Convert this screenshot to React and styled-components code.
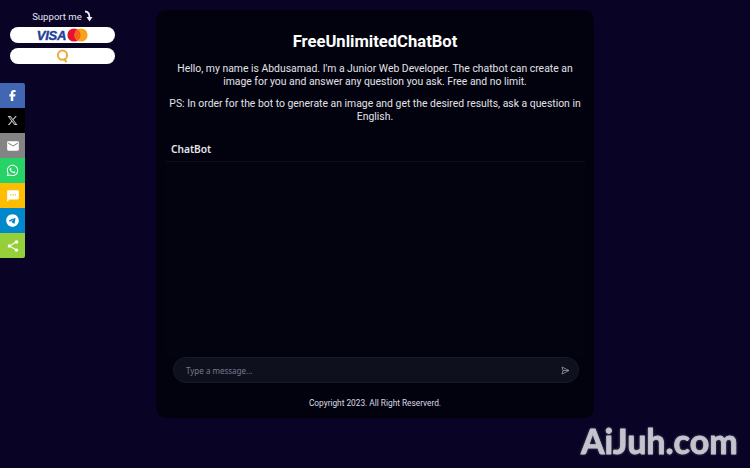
import React from 'react'
import styled, { createGlobalStyle } from 'styled-components'
import { FaFacebookF, FaWhatsapp, FaTelegram, FaXTwitter } from 'react-icons/fa6'
import { MdEmail, MdSms, MdShare } from 'react-icons/md'

const GlobalStyle = createGlobalStyle`
  html, body {
    margin: 0;
    height: 100%;
    background: #090326;
    font-family: Roboto, "Liberation Sans", sans-serif;
    overflow: hidden;
  }
`
const Page = styled.div`
  width: 750px;
  height: 468px;
  display: flex;
  flex-direction: row;
  background: #090326;
`
const LeftColumn = styled.div`
  width: 156px;
  flex-shrink: 0;
  padding: 7px 0 0 10px;
  box-sizing: border-box;
`
const SupportLabel = styled.div`
  width: 105px;
  height: 18px;
  margin-bottom: 2px;
  padding-left: 1px;
  box-sizing: border-box;
  display: flex;
  justify-content: center;
  align-items: center;
  gap: 2px;
  color: #e4e2ee;
  font-size: 9.6px;
`
const PayButton = styled.div`
  width: 105px;
  height: 16px;
  margin-bottom: 5px;
  background: #ffffff;
  border-radius: 8px;
  display: flex;
  justify-content: center;
  align-items: center;
`
const VisaText = styled.span`
  color: #1f3f9c;
  font: italic 900 13px "Liberation Sans", sans-serif;
  -webkit-text-stroke: 0.4px #1f3f9c;
  letter-spacing: -0.2px;
  margin-right: 1px;
`
const ShareBar = styled.div`
  position: fixed;
  left: 0;
  top: 83px;
  width: 25px;
  display: flex;
  flex-direction: column;
  border-radius: 0 2px 2px 0;
  overflow: hidden;
`
const ShareItem = styled.div`
  height: 25px;
  display: flex;
  align-items: center;
  justify-content: center;
  background: ${p => p.$bg};
  color: ${p => p.$fg || '#fff'};
  font-size: ${p => p.$size || 12}px;
`
const Card = styled.main`
  width: 438px;
  height: 408px;
  margin-top: 10px;
  padding: 21px 9px 0;
  box-sizing: border-box;
  background: #02020f;
  border-radius: 10px;
  display: flex;
  flex-direction: column;
  color: #e2e2e6;
`
const Title = styled.h1`
  margin: 1px 0 10px;
  height: 20px;
  line-height: 20px;
  text-align: center;
  color: #ffffff;
  font-size: 16.6px;
  font-weight: 700;
`
const Intro = styled.p`
  margin: 0 0 9px;
  text-align: center;
  font-size: 10.4px;
  line-height: 13px;
`
const ChatHeader = styled.div`
  margin-top: 4px;
  height: 25px;
  padding-left: 6px;
  display: flex;
  align-items: center;
  border-bottom: 1px solid #0b0c1c;
  font-family: "Noto Sans", sans-serif;
  font-size: 10.2px;
  font-weight: 600;
  color: #e6e6ea;
`
const Messages = styled.div`
  flex: 1;
  background: #02030f;
`
const InputRow = styled.div`
  margin: 0 6px 0 8px;
  height: 26px;
  padding: 0 8px 0 12px;
  display: flex;
  align-items: center;
  justify-content: space-between;
  background: #0e101d;
  border: 1px solid #181a2a;
  border-radius: 14px;
  box-sizing: border-box;
  font-family: "Noto Sans", sans-serif;
  font-size: 8px;
  color: #777a8c;
`
const Copyright = styled.footer`
  height: 35px;
  padding-top: 5px;
  box-sizing: border-box;
  display: flex;
  align-items: center;
  justify-content: center;
  font-size: 8.3px;
  color: #dcdce2;
`
const Watermark = styled.div`
  position: fixed;
  left: 581px;
  top: 422px;
  font-family: Lato, "Open Sans", sans-serif;
  font-size: 34px;
  line-height: 38px;
  font-weight: 700;
  color: #c4c4ce;
  -webkit-text-stroke: 0.8px #c4c4ce;
  text-shadow: 0 0 3px #7c7c88;
  filter: blur(0.7px);
`

const CurvedArrow = () => (
  <svg width="10" height="12" viewBox="0 0 10 12">
    <path d="M1 1.5c3 0 4.5 1.5 4.5 6" fill="none" stroke="#eeeef4" strokeWidth="1.8" />
    <path d="M2.5 7h6L5.5 11.5z" fill="#eeeef4" />
  </svg>
)

const MasterCard = () => (
  <svg width="21" height="14" viewBox="0 0 21 14">
    <circle cx="7" cy="7" r="6.6" fill="#e8112d" />
    <circle cx="14" cy="7" r="6.6" fill="#f7a21b" />
    <path d="M10.5 1.4a6.6 6.6 0 0 1 0 11.2a6.6 6.6 0 0 1 0-11.2z" fill="#f4631e" />
  </svg>
)

const QiwiLogo = () => (
  <svg width="14" height="14" viewBox="0 0 14 14">
    <circle cx="6.5" cy="6.2" r="4.6" fill="none" stroke="#eda93a" strokeWidth="2" />
    <path d="M8 10l2.6 3" fill="none" stroke="#eda93a" strokeWidth="2" />
  </svg>
)

const SendIcon = () => (
  <svg width="9" height="9" viewBox="0 0 9 9">
    <path d="M1 1l7 3.5L1 8l1-3.5z M2 4.5h6" fill="none" stroke="#9a9caa" strokeWidth="0.8" />
  </svg>
)

const shares = [
  { bg: '#4267b2', icon: <FaFacebookF />, size: 11 },
  { bg: '#000000', icon: <FaXTwitter />, fg: '#c9c9c9', size: 11 },
  { bg: '#848484', icon: <MdEmail />, size: 14 },
  { bg: '#25d366', icon: <FaWhatsapp />, size: 13 },
  { bg: '#ffbd00', icon: <MdSms />, size: 14 },
  { bg: '#0088cc', icon: <FaTelegram />, size: 13 },
  { bg: '#95d03a', icon: <MdShare />, size: 14 },
]

const App = () => {
  return (
    <>
      <GlobalStyle />
      <Page>
        <LeftColumn>
          <SupportLabel>Support me <CurvedArrow /></SupportLabel>
          <PayButton><VisaText>VISA</VisaText><MasterCard /></PayButton>
          <PayButton><QiwiLogo /></PayButton>
        </LeftColumn>
        <ShareBar>
          {shares.map((s, i) => (
            <ShareItem key={i} $bg={s.bg} $fg={s.fg} $size={s.size}>{s.icon}</ShareItem>
          ))}
        </ShareBar>
        <Card>
          <Title>FreeUnlimitedChatBot</Title>
          <Intro>Hello, my name is Abdusamad. I'm a Junior Web Developer. The chatbot can create an image for you and answer any question you ask. Free and no limit.</Intro>
          <Intro>PS: In order for the bot to generate an image and get the desired results, ask a question in English.</Intro>
          <ChatHeader>ChatBot</ChatHeader>
          <Messages />
          <InputRow>
            <span>Type a message...</span>
            <SendIcon />
          </InputRow>
          <Copyright>Copyright 2023. All Right Reserverd.</Copyright>
        </Card>
      </Page>
      <Watermark>AiJuh.com</Watermark>
    </>
  )
}

export default App
